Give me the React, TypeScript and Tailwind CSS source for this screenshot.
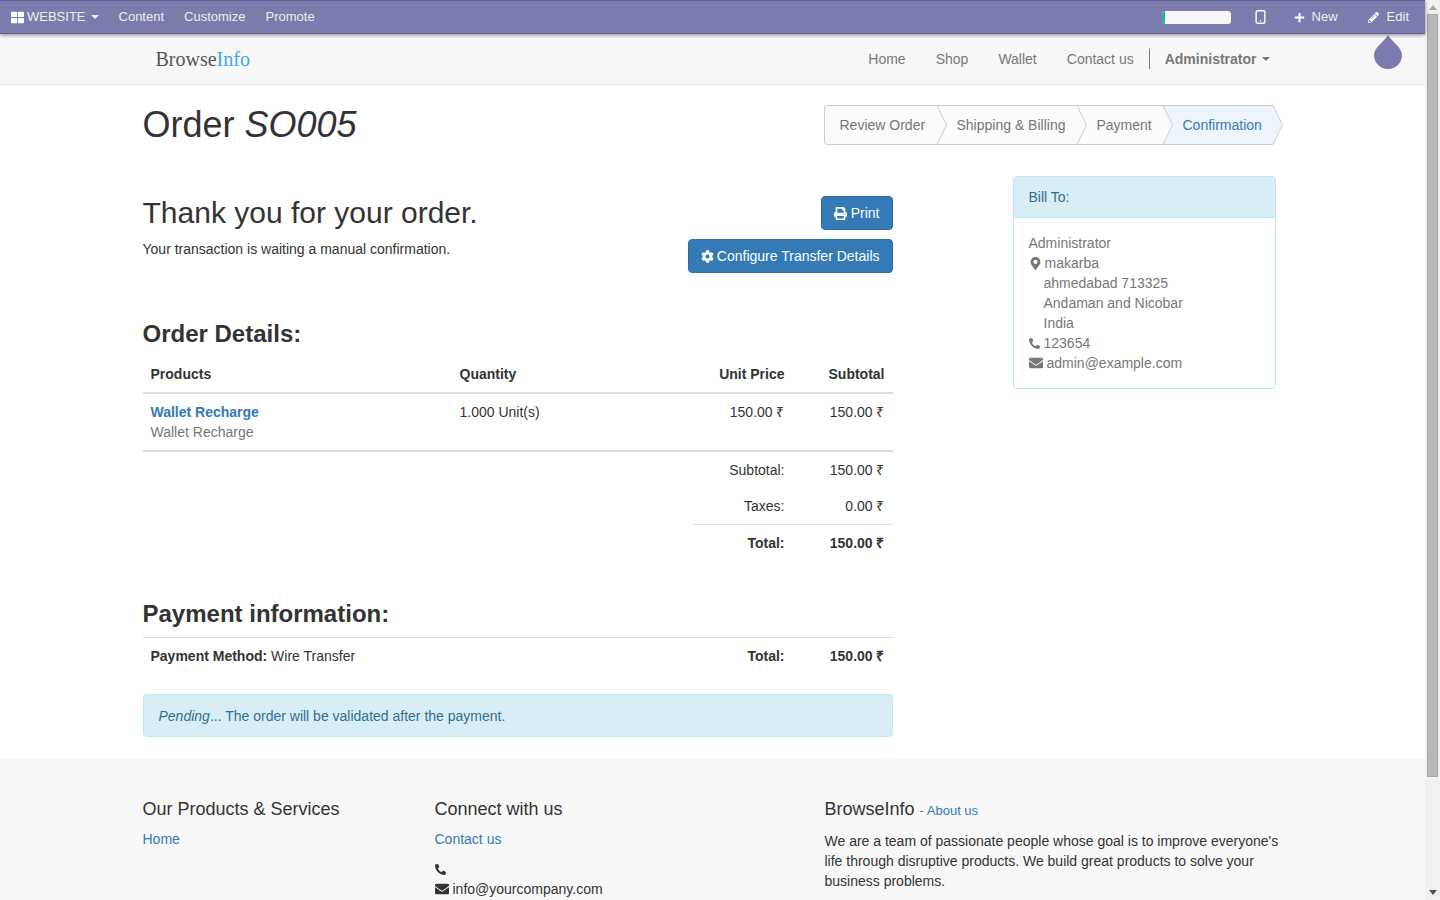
import { Smartphone } from "lucide-react";
import {
  FaCog,
  FaEnvelope,
  FaMapMarkerAlt,
  FaPencilAlt,
  FaPhoneAlt,
  FaPlus,
  FaPrint,
  FaThLarge,
} from "react-icons/fa";

const Caret = () => (
  <span className="inline-block ml-[5px] align-middle w-0 h-0 border-x-[4px] border-x-transparent border-t-[4px] border-t-current" />
);

const steps = [
  { label: "Review Order", width: "w-[113px]", pad: "pl-[15px] border-l border-l-[#ccc] rounded-l-[4px]" },
  { label: "Shipping & Billing", width: "w-[140px]", pad: "pl-[20px]" },
  { label: "Payment", width: "w-[86px]", pad: "pl-[20px]" },
  { label: "Confirmation", width: "w-[110px]", pad: "pl-[20px]", active: true },
];

const Steps = () => (
  <div className="flex h-[40px] mr-[10px]">
    {steps.map((s) => (
      <div
        key={s.label}
        className={`relative flex items-center border-y border-y-[#ccc] ${s.width} ${s.pad} ${
          s.active ? "bg-[#eef4fc] text-[#337ab7]" : "bg-[#fbfbfb] text-[#777]"
        }`}
      >
        <span className="relative z-20 whitespace-nowrap">{s.label}</span>
        <svg className="absolute z-10 left-full -top-px" width="11" height="40" viewBox="0 0 11 40">
          <path d="M0 0.5 L9.5 20 L0 39.5 Z" fill={s.active ? "#eef4fc" : "#fbfbfb"} />
          <path d="M0 0.5 L9.5 20 L0 39.5" fill="none" stroke="#ccc" />
        </svg>
      </div>
    ))}
  </div>
);

const TotalRow = ({ label, value, bold, line }: { label: string; value: string; bold?: boolean; line?: boolean }) => (
  <div className={`flex h-[36px] items-center justify-end px-[8px] ${bold ? "font-bold" : ""} ${line ? "box-content border-t border-t-[#ddd]" : ""}`}>
    <span>{label}</span>
    <span className="w-[100px] text-right">{value}</span>
  </div>
);

export default function App() {
  return (
    <div className="flex h-screen overflow-hidden bg-white text-[14px] leading-[20px] text-[#333] font-['Liberation_Sans',Arial,sans-serif]">
      <div className="relative w-[1425px] shrink-0">
        {/* admin bar */}
        <div className="relative z-30 flex h-[34px] items-center justify-between bg-[#7c7bad] border-t border-t-[#5f5e97] border-b border-b-[#5f5e97] shadow-[0_1px_4px_rgba(0,0,0,0.45)] text-[13px] text-[#eee] pl-[11px] pr-[16px]">
          <div className="flex items-center">
            <FaThLarge className="text-[13px] text-white mr-[3px]" />
            <span>WEBSITE</span>
            <Caret />
            <span className="ml-[20px]">Content</span>
            <span className="ml-[20px]">Customize</span>
            <span className="ml-[20px]">Promote</span>
          </div>
          <div className="flex items-center">
            <div className="w-[69px] h-[13px] bg-[#f5f5f5] rounded-[3px] overflow-hidden">
              <div className="w-[3px] h-full bg-[#21b799]" />
            </div>
            <Smartphone className="ml-[22px] w-[15px] h-[16px] text-white" strokeWidth={2.2} />
            <FaPlus className="ml-[26px] text-[11px] text-white" />
            <span className="ml-[7px]">New</span>
            <FaPencilAlt className="ml-[30px] text-[11px] text-white" />
            <span className="ml-[8px]">Edit</span>
          </div>
        </div>

        {/* drop handle */}
        <svg className="absolute z-20 left-[1373px] top-[33px]" width="30" height="38" viewBox="0 0 30 38">
          <path d="M15 2 C17 7 29 14 29 22 A14 14 0 0 1 1 22 C1 14 13 7 15 2 Z" fill="#7c7bad" />
        </svg>

        {/* navbar */}
        <div className="h-[51px] bg-[#f8f8f8] border-b border-b-[#e7e7e7] text-[#777]">
          <div className="w-[1170px] mx-auto flex h-[50px] items-center justify-between pl-[28px] pr-[28px]">
            <div className="text-[20px] font-['Liberation_Serif',serif] text-[#555]">
              Browse<span className="text-[#42a5f5]">Info</span>
            </div>
            <div className="flex items-center">
              <span>Home</span>
              <span className="ml-[30px]">Shop</span>
              <span className="ml-[30px]">Wallet</span>
              <span className="ml-[30px]">Contact us</span>
              <span className="ml-[15px] h-[20px] border-l border-l-[#777]" />
              <span className="ml-[15px] font-bold">Administrator</span>
              <Caret />
            </div>
          </div>
        </div>

        <div className="w-[1140px] mx-auto">
          <div className="flex justify-between pt-[20px]">
            <h1 className="text-[36px] leading-[40px] font-normal">
              Order <em>SO005</em>
            </h1>
            <Steps />
          </div>

          <div className="flex justify-between mt-[31px] h-[582px]">
            <div className="w-[750px] pt-[20px]">
              <div className="flex justify-between">
                <div>
                  <h2 className="text-[30px] leading-[33px]">Thank you for your order.</h2>
                  <p className="mt-[10px]">Your transaction is waiting a manual confirmation.</p>
                </div>
                <div className="flex flex-col items-end gap-[9px]">
                  <button className="flex items-center h-[34px] px-[12px] bg-[#337ab7] border border-[#2e6da4] rounded-[4px] text-white">
                    <FaPrint className="text-[13px] mr-[4px]" />
                    Print
                  </button>
                  <button className="flex items-center h-[34px] px-[12px] bg-[#337ab7] border border-[#2e6da4] rounded-[4px] text-white">
                    <FaCog className="text-[13px] mr-[3px]" />
                    Configure Transfer Details
                  </button>
                </div>
              </div>

              <h3 className="mt-[47px] text-[24px] leading-[27px] font-bold">Order Details:</h3>
              <table className="mt-[9px] w-full table-fixed border-separate border-spacing-0">
                <thead>
                  <tr className="text-left">
                    <th className="w-[309px] h-[38px] px-[8px] border-b-2 border-b-[#ddd]">Products</th>
                    <th className="px-[8px] border-b-2 border-b-[#ddd]">Quantity</th>
                    <th className="w-[120px] px-[8px] text-right border-b-2 border-b-[#ddd]">Unit Price</th>
                    <th className="w-[100px] px-[8px] text-right border-b-2 border-b-[#ddd]">Subtotal</th>
                  </tr>
                </thead>
                <tbody>
                  <tr className="align-top">
                    <td className="p-[8px] border-b-2 border-b-[#ddd]">
                      <div className="font-bold text-[#337ab7]">Wallet Recharge</div>
                      <div className="text-[#777]">Wallet Recharge</div>
                    </td>
                    <td className="p-[8px] border-b-2 border-b-[#ddd]">1.000 Unit(s)</td>
                    <td className="p-[8px] text-right border-b-2 border-b-[#ddd]">150.00 ₹</td>
                    <td className="p-[8px] text-right border-b-2 border-b-[#ddd]">150.00 ₹</td>
                  </tr>
                </tbody>
              </table>
              <div className="ml-auto w-[200px]">
                <TotalRow label="Subtotal:" value="150.00 ₹" />
                <TotalRow label="Taxes:" value="0.00 ₹" />
                <TotalRow label="Total:" value="150.00 ₹" bold line />
              </div>

              <h3 className="mt-[40px] text-[24px] leading-[26px] font-bold">Payment information:</h3>
              <div className="mt-[10px] flex h-[37px] items-center justify-between border-t border-t-[#ddd] px-[8px]">
                <span>
                  <b>Payment Method:</b> Wire Transfer
                </span>
                <span className="flex font-bold">
                  Total:
                  <span className="w-[100px] text-right">150.00 ₹</span>
                </span>
              </div>
              <div className="mt-[20px] flex h-[43px] items-center px-[15px] bg-[#d9edf7] border border-[#bce8f1] rounded-[4px] text-[#31708f]">
                <span>
                  <em>Pending</em>... The order will be validated after the payment.
                </span>
              </div>
            </div>

            <div className="w-[263px] h-[213px] mr-[7px] border border-[#bce8f1] rounded-[4px] text-[#777]">
              <div className="h-[41px] flex items-center px-[15px] bg-[#d9edf7] border-b border-b-[#bce8f1] text-[#31708f]">
                Bill To:
              </div>
              <div className="px-[15px] pt-[15px]">
                <div>Administrator</div>
                <div className="flex items-center">
                  <FaMapMarkerAlt className="text-[13px] mr-[3px]" />
                  makarba
                </div>
                <div className="pl-[15px]">ahmedabad 713325</div>
                <div className="pl-[15px]">Andaman and Nicobar</div>
                <div className="pl-[15px]">India</div>
                <div className="flex items-center">
                  <FaPhoneAlt className="text-[11px] mr-[4px]" />
                  123654
                </div>
                <div className="flex items-center">
                  <FaEnvelope className="text-[14px] mr-[4px]" />
                  admin@example.com
                </div>
              </div>
            </div>
          </div>
        </div>

        {/* footer */}
        <div className="bg-[#f8f8f8] h-[200px] pt-[41px]">
          <div className="w-[1140px] mx-auto flex">
            <div className="w-[292px]">
              <h4 className="text-[18px] leading-[20px]">Our Products &amp; Services</h4>
              <div className="mt-[10px] text-[#337ab7]">Home</div>
            </div>
            <div className="w-[390px]">
              <h4 className="text-[18px] leading-[20px]">Connect with us</h4>
              <div className="mt-[10px] text-[#337ab7]">Contact us</div>
              <div className="mt-[10px] h-[20px] flex items-center">
                <FaPhoneAlt className="text-[11px]" />
              </div>
              <div className="flex items-center">
                <FaEnvelope className="text-[14px] mr-[4px]" />
                info@yourcompany.com
              </div>
            </div>
            <div className="w-[458px]">
              <h4 className="text-[18px] leading-[20px]">
                BrowseInfo <small className="text-[13px] text-[#337ab7]"><span className="text-[#777]">-</span> About us</small>
              </h4>
              <p className="mt-[10px]">
                We are a team of passionate people whose goal is to improve everyone's life through disruptive products. We build great products to solve your business problems.
              </p>
            </div>
          </div>
        </div>
      </div>

      {/* scrollbar */}
      <div className="flex w-[15px] shrink-0 flex-col items-center bg-[#f1f1f1]">
        <div className="mt-[5px] w-0 h-0 border-x-[4px] border-x-transparent border-b-[5px] border-b-[#a3a3a3]" />
        <div className="mt-[4px] w-[11px] h-[763px] bg-[#b8b8b8] border border-[#a8a8a8]" />
        <div className="mt-[113px] w-0 h-0 border-x-[4px] border-x-transparent border-t-[5px] border-t-[#505050]" />
      </div>
    </div>
  );
}
